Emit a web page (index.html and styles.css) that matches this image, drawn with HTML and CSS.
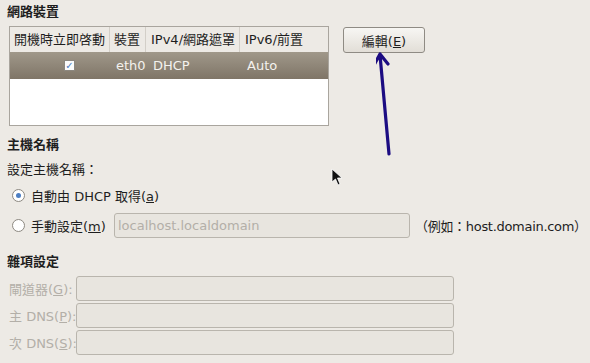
FILE: index.html
```html
<!DOCTYPE html>
<html lang="zh-Hant">
<head>
  <meta charset="UTF-8">
  <title>網路裝置</title>
  <link rel="stylesheet" href="styles.css">
</head>
<body>
  <div class="page">
    <h3 class="title">網路裝置</h3>
    <div class="devices">
      <div class="table-frame">
        <div class="table-head">
          <div class="cell">開機時立即啓動</div>
          <div class="cell">裝置</div>
          <div class="cell">IPv4/網路遮罩</div>
          <div class="cell last">IPv6/前置</div>
        </div>
        <div class="table-row selected">
          <div class="cell check-cell"><span class="check">&#10003;</span></div>
          <div class="cell dev">eth0</div>
          <div class="cell">DHCP</div>
          <div class="cell">Auto</div>
        </div>
      </div>
      <button class="edit-btn">編輯(<u>E</u>)</button>
    </div>

    <h3 class="title host-title">主機名稱</h3>
    <div class="label-line">設定主機名稱：</div>
    <div class="radio-row">
      <span class="radio on"></span>
      <span class="radio-text">自動由 DHCP 取得(<u>a</u>)</span>
    </div>
    <div class="radio-row manual">
      <span class="radio"></span>
      <span class="radio-text manual-label">手動設定(<u>m</u>)</span>
      <div class="field host-field">localhost.localdomain</div>
      <span class="hint">（例如：host.domain.com）</span>
    </div>

    <h3 class="title misc-title">雜項設定</h3>
    <div class="fields">
      <div class="field-row">
        <span class="field-label">閘道器(<u>G</u>):</span>
        <div class="field wide"></div>
      </div>
      <div class="field-row">
        <span class="field-label">主 DNS(<u>P</u>):</span>
        <div class="field wide"></div>
      </div>
      <div class="field-row">
        <span class="field-label">次 DNS(<u>S</u>):</span>
        <div class="field wide"></div>
      </div>
    </div>
  </div>

  <svg class="arrow" width="20" height="110" viewBox="0 0 20 110">
    <path d="M13 104 L4 5 M-3 17 L4 4 L12 14" fill="none" stroke="#1c0c82" stroke-width="3.2" stroke-linecap="round" stroke-linejoin="round"/>
  </svg>
  <svg class="pointer" width="14" height="20" viewBox="0 0 14 20">
    <path d="M1 1 L1 14 L4.5 11 L7 17 L9 16 L6.5 10 L11 10 Z" fill="#111" stroke="#fff" stroke-width="0.8" stroke-linejoin="round"/>
  </svg>
</body>
</html>
```

FILE: styles.css
```css
body {
  margin: 0;
  background-color: #edeae5;
  font-family: "DejaVu Sans", "Noto Sans CJK TC", sans-serif;
  font-size: 13px;
  color: #1e1e1e;
  width: 590px;
  height: 363px;
  overflow: hidden;
  position: relative;
}

.page {
  display: flex;
  flex-direction: column;
  padding: 3px 0 0 7px;
}

.title {
  margin: 0;
  font-size: 13px;
  font-weight: bold;
  line-height: 18px;
  height: 18px;
}

.devices {
  display: flex;
  align-items: flex-start;
  margin: 5px 0 0 2px;
}

.table-frame {
  width: 318px;
  height: 98px;
  border: 1px solid #a9a59e;
  background-color: #fff;
}

.table-head,
.table-row {
  display: grid;
  grid-template-columns: 100px 36px 94px 1fr;
}

.table-head {
  height: 25px;
  background-color: #edeae5;
}

.table-head .cell {
  line-height: 25px;
  padding-left: 4px;
  border-right: 1px solid #d3cfc8;
  white-space: nowrap;
  overflow: hidden;
}

.table-head .cell:nth-child(3),
.table-head .cell.last {
  padding-left: 5px;
}

.table-head .cell.last {
  border-right: none;
}

.table-row {
  height: 27px;
}

.table-row .cell {
  line-height: 27px;
  padding-left: 7px;
}

.table-row.selected {
  background: linear-gradient(#a0988a, #7f7567);
  color: #f4f2ee;
}

.table-row .dev {
  padding-left: 6px;
}

.check-cell {
  display: flex;
  align-items: center;
}

.check {
  margin-left: 47px;
  width: 9px;
  height: 9px;
  border: 1px solid #8c877f;
  background-color: #fbfbfb;
  color: #4a7cc0;
  font-size: 10px;
  font-weight: bold;
  line-height: 9px;
  text-align: center;
}

.edit-btn {
  margin-left: 14px;
  margin-top: 1px;
  width: 82px;
  height: 26px;
  border: 1px solid #8f8b84;
  border-radius: 3px;
  background: linear-gradient(#f7f6f3, #e2ded7);
  font-family: inherit;
  font-size: 13px;
  color: #1e1e1e;
  padding: 0;
}

.host-title {
  margin-top: 10px;
}

.label-line {
  margin-top: 5px;
  line-height: 22px;
  height: 22px;
}

.radio-row {
  display: flex;
  align-items: center;
  height: 26px;
  margin-top: 1px;
}

.radio-row.manual {
  margin-top: 4px;
}

.radio-text {
  white-space: nowrap;
  flex-shrink: 0;
}

.manual-label {
  width: 79px;
}

.radio {
  flex-shrink: 0;
  width: 11px;
  height: 11px;
  border: 1px solid #8d8981;
  border-radius: 50%;
  background-color: #fff;
  margin: 0 6px 0 5px;
  position: relative;
}

.radio.on::after {
  content: "";
  position: absolute;
  left: 3px;
  top: 3px;
  width: 5px;
  height: 5px;
  border-radius: 50%;
  background-color: #4d7fc3;
}

.field {
  box-sizing: border-box;
  flex-shrink: 0;
  height: 25px;
  border: 1px solid #b9b5ad;
  border-radius: 3px;
  background-color: #e8e5df;
  color: #b3afa8;
  line-height: 23px;
  padding-left: 3px;
}

.host-field {
  width: 296px;
  margin-left: 4px;
}

.hint {
  margin-left: 5px;
  white-space: nowrap;
  letter-spacing: -0.3px;
}

.misc-title {
  margin-top: 15px;
}

.fields {
  display: flex;
  flex-direction: column;
  gap: 3px;
  margin-top: 5px;
}

.field-row {
  display: flex;
  align-items: center;
  height: 24px;
}

.field-label {
  flex-shrink: 0;
  width: 67px;
  padding-left: 2px;
  color: #b3afa8;
  white-space: nowrap;
}

.field.wide {
  width: 378px;
  height: 25px;
}

.arrow {
  position: absolute;
  left: 376px;
  top: 50px;
}

.pointer {
  position: absolute;
  left: 331px;
  top: 168px;
}
```
